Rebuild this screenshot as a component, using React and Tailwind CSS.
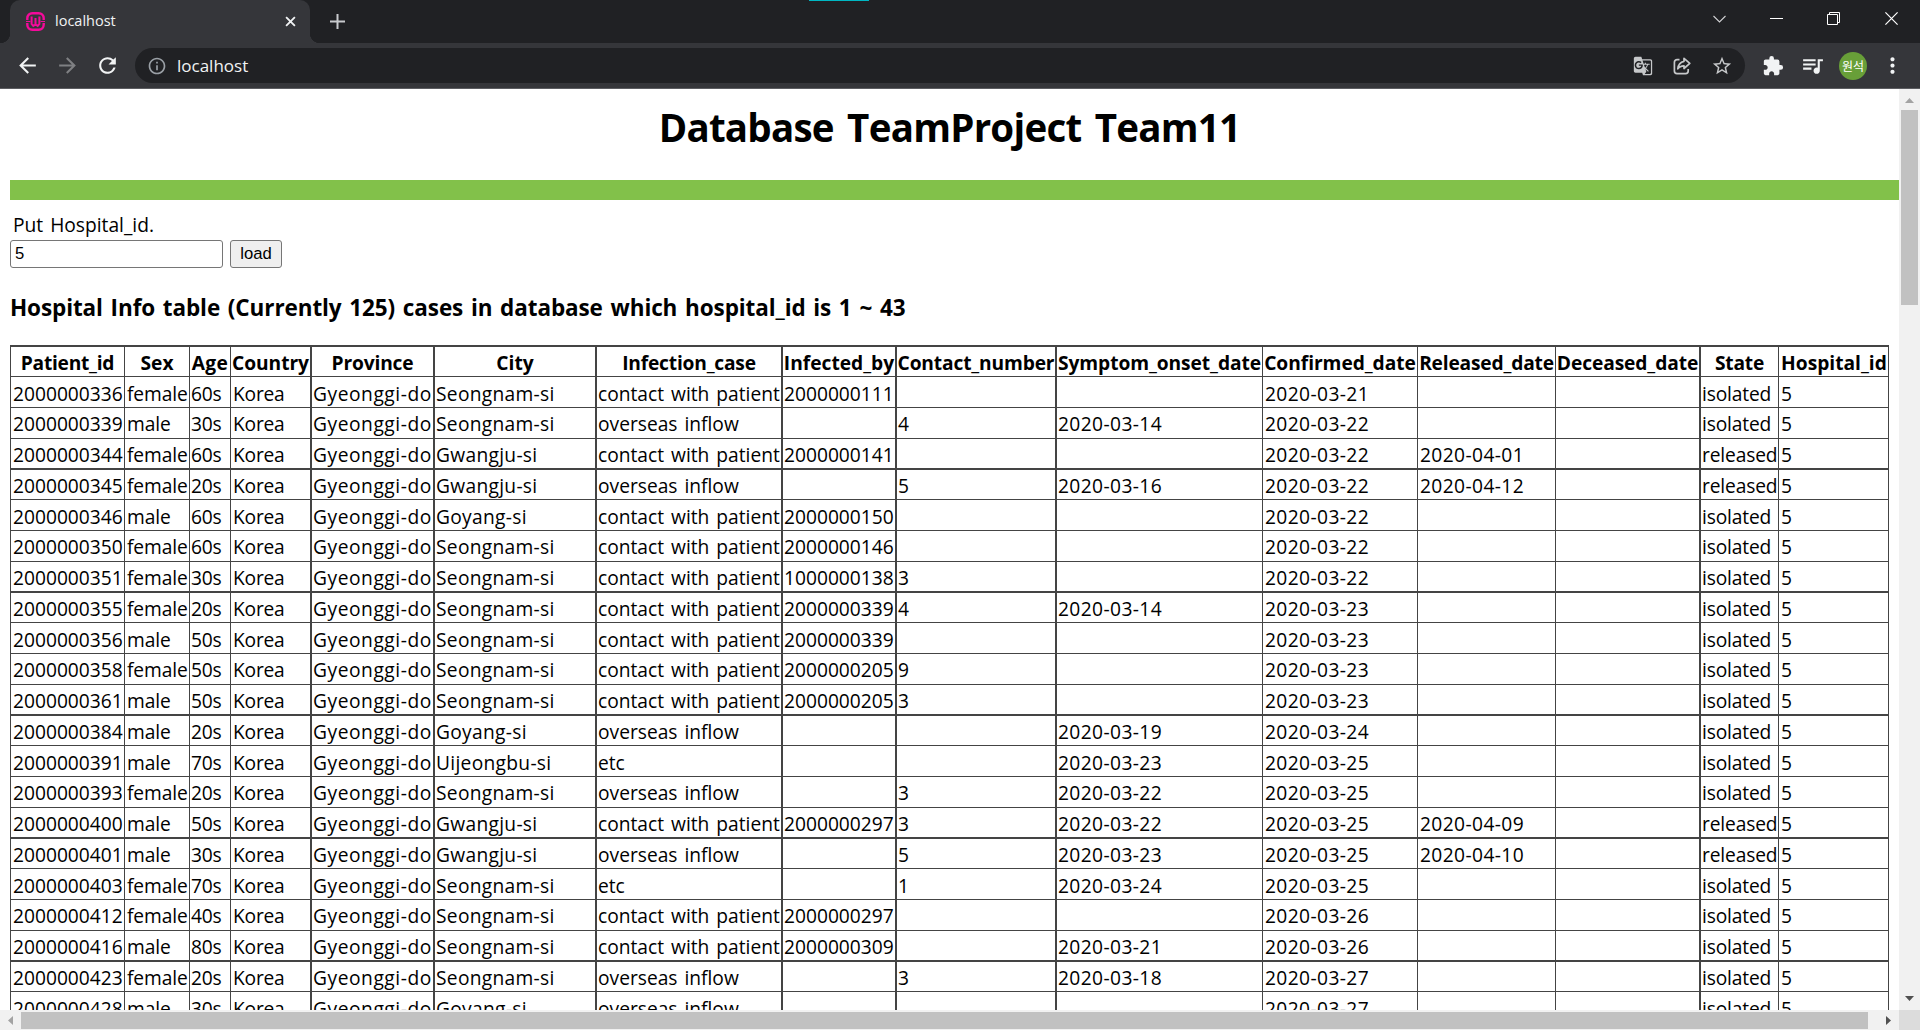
import { MdArrowBack, MdArrowForward, MdRefresh, MdInfoOutline, MdGTranslate, MdStarBorder, MdExtension, MdQueueMusic, MdMoreVert } from 'react-icons/md';

const GG = 'Gyeonggi-do';
const CONTACT = 'contact with patient';
const OVERSEAS = 'overseas inflow';

const columns = [
  { name: 'Patient_id', width: 'w-[114px]', head: 'tracking-[-0.25px]', body: 'pl-[2px]', border: 'border-l' },
  { name: 'Sex', width: 'w-[65px]', head: '', body: 'pl-[2px] tracking-[-0.1px]', border: 'border-l' },
  { name: 'Age', width: 'w-[41px]', head: 'tracking-[0.4px]', body: 'pl-[1px] tracking-[-0.2px]', border: 'border-l' },
  { name: 'Country', width: 'w-[80px]', head: 'tracking-[-0.05px]', body: 'pl-[2px] tracking-[-0.2px]', border: 'border-l' },
  { name: 'Province', width: 'w-[123px]', head: 'tracking-[-0.15px]', body: 'pl-[1px] tracking-[0.55px]', border: 'border-l-2' },
  { name: 'City', width: 'w-[162px]', head: '', body: 'pl-[1px] tracking-[0.3px]', border: 'border-l-2' },
  { name: 'Infection_case', width: 'w-[186px]', head: 'tracking-[-0.2px]', body: 'pl-[1px] [word-spacing:2px]', border: 'border-l-2' },
  { name: 'Infected_by', width: 'w-[114px]', head: '', body: 'pl-[1px]', border: 'border-l-2' },
  { name: 'Contact_number', width: 'w-[160px]', head: 'tracking-[-0.15px]', body: 'pl-[1px]', border: 'border-l-2' },
  { name: 'Symptom_onset_date', width: 'w-[207px]', head: 'tracking-[-0.08px]', body: 'pl-[1px] tracking-[0.4px]', border: 'border-l-2' },
  { name: 'Confirmed_date', width: 'w-[155px]', head: 'tracking-[-0.05px]', body: 'pl-[2px] tracking-[0.4px]', border: 'border-l' },
  { name: 'Released_date', width: 'w-[138px]', head: 'tracking-[-0.18px]', body: 'pl-[2px] tracking-[0.4px]', border: 'border-l' },
  { name: 'Deceased_date', width: 'w-[144px]', head: 'tracking-[-0.1px]', body: '', border: 'border-l' },
  { name: 'State', width: 'w-[79px]', head: 'tracking-[-0.2px]', body: 'pl-[1px] tracking-[-0.15px]', border: 'border-l-2' },
  { name: 'Hospital_id', width: 'w-[111px]', head: 'pl-px', body: 'pl-[2px]', border: 'border-x' },
];

const patients = [
  ['2000000336', 'female', '60s', 'Korea', GG, 'Seongnam-si', CONTACT, '2000000111', '', '', '2020-03-21', '', '', 'isolated', '5'],
  ['2000000339', 'male', '30s', 'Korea', GG, 'Seongnam-si', OVERSEAS, '', '4', '2020-03-14', '2020-03-22', '', '', 'isolated', '5'],
  ['2000000344', 'female', '60s', 'Korea', GG, 'Gwangju-si', CONTACT, '2000000141', '', '', '2020-03-22', '2020-04-01', '', 'released', '5'],
  ['2000000345', 'female', '20s', 'Korea', GG, 'Gwangju-si', OVERSEAS, '', '5', '2020-03-16', '2020-03-22', '2020-04-12', '', 'released', '5'],
  ['2000000346', 'male', '60s', 'Korea', GG, 'Goyang-si', CONTACT, '2000000150', '', '', '2020-03-22', '', '', 'isolated', '5'],
  ['2000000350', 'female', '60s', 'Korea', GG, 'Seongnam-si', CONTACT, '2000000146', '', '', '2020-03-22', '', '', 'isolated', '5'],
  ['2000000351', 'female', '30s', 'Korea', GG, 'Seongnam-si', CONTACT, '1000000138', '3', '', '2020-03-22', '', '', 'isolated', '5'],
  ['2000000355', 'female', '20s', 'Korea', GG, 'Seongnam-si', CONTACT, '2000000339', '4', '2020-03-14', '2020-03-23', '', '', 'isolated', '5'],
  ['2000000356', 'male', '50s', 'Korea', GG, 'Seongnam-si', CONTACT, '2000000339', '', '', '2020-03-23', '', '', 'isolated', '5'],
  ['2000000358', 'female', '50s', 'Korea', GG, 'Seongnam-si', CONTACT, '2000000205', '9', '', '2020-03-23', '', '', 'isolated', '5'],
  ['2000000361', 'male', '50s', 'Korea', GG, 'Seongnam-si', CONTACT, '2000000205', '3', '', '2020-03-23', '', '', 'isolated', '5'],
  ['2000000384', 'male', '20s', 'Korea', GG, 'Goyang-si', OVERSEAS, '', '', '2020-03-19', '2020-03-24', '', '', 'isolated', '5'],
  ['2000000391', 'male', '70s', 'Korea', GG, 'Uijeongbu-si', 'etc', '', '', '2020-03-23', '2020-03-25', '', '', 'isolated', '5'],
  ['2000000393', 'female', '20s', 'Korea', GG, 'Seongnam-si', OVERSEAS, '', '3', '2020-03-22', '2020-03-25', '', '', 'isolated', '5'],
  ['2000000400', 'male', '50s', 'Korea', GG, 'Gwangju-si', CONTACT, '2000000297', '3', '2020-03-22', '2020-03-25', '2020-04-09', '', 'released', '5'],
  ['2000000401', 'male', '30s', 'Korea', GG, 'Gwangju-si', OVERSEAS, '', '5', '2020-03-23', '2020-03-25', '2020-04-10', '', 'released', '5'],
  ['2000000403', 'female', '70s', 'Korea', GG, 'Seongnam-si', 'etc', '', '1', '2020-03-24', '2020-03-25', '', '', 'isolated', '5'],
  ['2000000412', 'female', '40s', 'Korea', GG, 'Seongnam-si', CONTACT, '2000000297', '', '', '2020-03-26', '', '', 'isolated', '5'],
  ['2000000416', 'male', '80s', 'Korea', GG, 'Seongnam-si', CONTACT, '2000000309', '', '2020-03-21', '2020-03-26', '', '', 'isolated', '5'],
  ['2000000423', 'female', '20s', 'Korea', GG, 'Seongnam-si', OVERSEAS, '', '3', '2020-03-18', '2020-03-27', '', '', 'isolated', '5'],
  ['2000000428', 'male', '30s', 'Korea', GG, 'Goyang-si', OVERSEAS, '', '', '', '2020-03-27', '', '', 'isolated', '5'],
];

// Row metrics repeat every four rows: the 30.75px pitch lands on whole pixels.
const rowStyles = [
  { height: 'h-[31px]', cell: 'border-t-2 pt-[2px]' },
  { height: 'h-[31px]', cell: 'border-t pt-[3px]' },
  { height: 'h-[31px]', cell: 'border-t pt-[2px]' },
  { height: 'h-[30px]', cell: 'border-t pt-[2px]' },
];

function Favicon() {
  return (
    <svg className="size-[19px]" viewBox="0 0 19 19" fill="none" stroke="#f50a9b">
      <path d="M1.3 8V6.2a5 5 0 0 1 5-5h6.4a5 5 0 0 1 5 5V8M1.3 11v1.8a5 5 0 0 0 5 5h6.4a5 5 0 0 0 5-5V11" strokeWidth="2.4" />
      <path d="M0 9.5h4.4M14.6 9.5H19" strokeWidth="1.2" />
      <path d="M5.6 4.500v7.500L7.300 14l2.200-1.600 2.200 1.600 1.700-2V4.500M9.500 6v6.400" strokeWidth="2" />
    </svg>
  );
}

function ShareIcon() {
  return (
    <svg className="size-5" viewBox="0 0 20 20" fill="none" stroke="#c6c8ca" strokeWidth="1.7" strokeLinejoin="round">
      <path d="M7.5 3.6H5A2.6 2.6 0 0 0 2.4 6.2v8.9a2.6 2.6 0 0 0 2.6 2.6h8.6a2.6 2.6 0 0 0 2.6-2.6V13" />
      <path d="M12 2.3l5.8 5.1-5.8 5.1V9.8c-3 0-4.900 1-6.200 3.100.4-3.900 2.500-6.900 6.200-7.600z" />
    </svg>
  );
}

function TabStrip() {
  return (
    <div className="relative flex h-[43px] bg-[#202124] pl-[10px]">
      <div className="absolute left-[809px] top-0 h-px w-[60px] bg-[#00b7c3]" />
      <div className="absolute bottom-0 left-0 size-[10px] bg-[radial-gradient(circle_at_0_0,#202124_10px,#35363a_10.5px)]" />
      <div className="absolute bottom-0 left-[310px] size-[10px] bg-[radial-gradient(circle_at_100%_0,#202124_10px,#35363a_10.5px)]" />
      <div className="flex w-[300px] items-center rounded-t-[10px] bg-[#35363a] pl-4 pr-[14px]">
        <Favicon />
        <span className="ml-[10px] flex-1 pb-px text-[14.5px] leading-5 text-[#f1f3f4]">localhost</span>
        <svg className="size-[11px]" viewBox="0 0 12 12" stroke="#f1f3f4" strokeWidth="2">
          <path d="M1.2 1.2l9.600 9.600M10.800 1.200l-9.600 9.600" />
        </svg>
      </div>
      <svg className="ml-5 mt-[14px] size-[15px]" viewBox="0 0 15 15" stroke="#c8cacd" strokeWidth="2">
        <path d="M7.500 0v15M0 7.500h15" />
      </svg>
      <div className="ml-auto mr-[22px] mt-3 flex h-[13px] items-center">
        <svg className="h-[8px] w-[13px]" viewBox="0 0 13 8" fill="none" stroke="#d0d1d3" strokeWidth="1.1">
          <path d="M.5 1l6 6 6-6" />
        </svg>
        <div className="ml-11 h-px w-[13px] bg-white" />
        <svg className="ml-11 size-[13px]" viewBox="0 0 13 13" fill="none" stroke="#fff" strokeWidth="1">
          <path d="M.5 2.500h10v10H.5zM2.500 2.500v-2h10v10h-2" />
        </svg>
        <svg className="ml-[45px] size-[13px]" viewBox="0 0 13 13" stroke="#fff" strokeWidth="1.2">
          <path d="M.4.4l12.200 12.200M12.600.4L.4 12.600" />
        </svg>
      </div>
    </div>
  );
}

function Toolbar() {
  return (
    <div className="flex h-[46px] items-center border-b border-[#5c5d61] bg-[#35363a] pl-[15px] pr-[15px]">
      <div className="flex w-[120px] shrink-0 items-center gap-[15px] text-[25px]">
        <MdArrowBack className="text-[#f1f3f4]" />
        <MdArrowForward className="text-[#7f8083]" />
        <MdRefresh className="text-[#f1f3f4]" />
      </div>
      <div className="flex h-[35px] w-[1610px] items-center rounded-full bg-[#202124] pl-3 pr-3">
        <MdInfoOutline className="text-[20px] text-[#9aa0a6]" />
        <span className="ml-[10px] flex-1 text-[17px] leading-6 text-[#f1f3f4]">localhost</span>
        <div className="flex items-center gap-[19px] text-[#c6c8ca]">
          <MdGTranslate className="text-[20px]" />
          <ShareIcon />
          <MdStarBorder className="text-[22px]" />
        </div>
      </div>
      <div className="ml-[17px] flex items-center text-[#f1f3f4]">
        <MdExtension className="text-[22px]" />
        <MdQueueMusic className="ml-[16px] text-[25px]" />
        <div className="ml-[14px] flex size-7 items-center justify-center rounded-full bg-[#689f38] font-['Noto_Sans_CJK_KR',sans-serif] text-[12px] leading-none text-white">원석</div>
        <MdMoreVert className="ml-[13px] text-[25px]" />
      </div>
    </div>
  );
}

function Row({ cells, index, header = false }) {
  const style = rowStyles[index % 4];
  const Cell = header ? 'th' : 'td';
  return (
    <tr className={style.height}>
      {cells.map((text, i) => {
        const col = columns[i];
        const tone = header ? `${col.width} text-center font-bold ${col.head}` : `text-left ${col.body}`;
        return (
          <Cell key={col.name} className={`border-[#444] ${col.border} ${style.cell} ${style.height} ${tone} whitespace-nowrap align-top`}>
            {text}
          </Cell>
        );
      })}
    </tr>
  );
}

function Page() {
  return (
    <main className="h-[921px] min-w-0 flex-1 overflow-hidden bg-white pl-[10px] pt-3 text-[19.2px] leading-[27px] text-black">
      <h1 className="mr-[10px] text-center text-[38.5px] font-bold leading-[53px] tracking-[-0.75px] [word-spacing:4px]">Database TeamProject Team11</h1>
      <div className="mt-[26px] h-5 bg-[#82c14a]" />
      <form className="mt-[11px]">
        <label className="block pl-[3px] [word-spacing:2px]">Put Hospital_id.</label>
        <div className="mt-[2px] flex gap-[7px] font-['Liberation_Sans',Arial,sans-serif] text-[16.67px] leading-5">
          <input className="h-7 w-[213px] rounded-[3px] border border-[#767676] bg-white px-1" defaultValue="5" />
          <button type="button" className="h-7 w-[52px] rounded-[3px] border border-[#767676] bg-[#efefef]">load</button>
        </div>
      </form>
      <h3 className="mt-6 text-[22.5px] font-bold leading-[31px] tracking-[-0.1px] [word-spacing:2px]">
        Hospital Info table (Currently 125) cases in database which hospital_id is 1 ~ 43
      </h3>
      <table className="mt-[22px] w-[1879px] table-fixed border-separate border-spacing-0">
        <thead>
          <Row cells={columns.map((c) => c.name)} index={0} header />
        </thead>
        <tbody>
          {patients.map((cells, i) => (
            <Row key={cells[0]} cells={cells} index={i + 1} />
          ))}
        </tbody>
      </table>
    </main>
  );
}

function VerticalScrollbar() {
  return (
    <div className="flex h-[921px] w-[21px] flex-col items-center bg-[#f1f1f1]">
      <svg className="mt-[9px] h-[5px] w-[9px]" viewBox="0 0 9 5" fill="#a3a3a3"><path d="M4.5 0L9 5H0z" /></svg>
      <div className="mt-[7px] h-[195px] w-[17px] bg-[#c1c1c1]" />
      <svg className="mb-[9px] mt-auto h-[5px] w-[9px]" viewBox="0 0 9 5" fill="#505050"><path d="M4.5 5L0 0h9z" /></svg>
    </div>
  );
}

function HorizontalScrollbar() {
  return (
    <div className="flex h-5 bg-[#f1f1f1]">
      <div className="flex w-[1899px] items-center">
        <svg className="ml-2 h-[9px] w-[5px]" viewBox="0 0 5 9" fill="#a3a3a3"><path d="M0 4.5L5 0v9z" /></svg>
        <div className="ml-2 h-[17px] w-[1847px] bg-[#c1c1c1]" />
        <svg className="ml-auto mr-2 h-[9px] w-[5px]" viewBox="0 0 5 9" fill="#505050"><path d="M5 4.5L0 9V0z" /></svg>
      </div>
      <div className="flex-1 bg-[#dcdcdc]" />
    </div>
  );
}

export default function App() {
  return (
    <div className="flex h-[1030px] w-[1920px] flex-col overflow-hidden font-['Open_Sans','Noto_Sans_CJK_KR',sans-serif]">
      <TabStrip />
      <Toolbar />
      <div className="flex">
        <Page />
        <VerticalScrollbar />
      </div>
      <HorizontalScrollbar />
    </div>
  );
}
